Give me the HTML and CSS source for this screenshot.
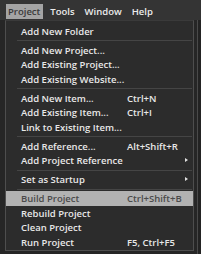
FILE: index.html
```html
<!DOCTYPE html>
<html>
<head>
<meta charset="utf-8">
<link rel="stylesheet" href="styles.css">
</head>
<body>
<div class="screen">
  <div class="menubar">
    <span class="top active">Project</span>
    <span class="top">Tools</span>
    <span class="top">Window</span>
    <span class="top">Help</span>
  </div>
  <div class="below">
    <div class="dropdown">
      <div class="item"><span class="label">Add New Folder</span></div>
      <div class="sep"></div>
      <div class="item"><span class="label">Add New Project...</span></div>
      <div class="item"><span class="label">Add Existing Project...</span></div>
      <div class="item"><span class="label">Add Existing Website...</span></div>
      <div class="sep"></div>
      <div class="item"><span class="label">Add New Item...</span><span class="key">Ctrl+N</span></div>
      <div class="item"><span class="label">Add Existing Item...</span><span class="key">Ctrl+I</span></div>
      <div class="item"><span class="label">Link to Existing Item...</span></div>
      <div class="sep"></div>
      <div class="item"><span class="label">Add Reference...</span><span class="key">Alt+Shift+R</span></div>
      <div class="item"><span class="label">Add Project Reference</span><span class="arrow"></span></div>
      <div class="sep"></div>
      <div class="item"><span class="label">Set as Startup</span><span class="arrow"></span></div>
      <div class="sep"></div>
      <div class="item hot"><span class="label">Build Project</span><span class="key">Ctrl+Shift+B</span></div>
      <div class="item"><span class="label">Rebuild Project</span></div>
      <div class="item"><span class="label">Clean Project</span></div>
      <div class="item"><span class="label">Run Project</span><span class="key">F5, Ctrl+F5</span></div>
    </div>
  </div>
</div>
</body>
</html>
```
FILE: styles.css
```css
html, body {
  margin: 0;
  padding: 0;
  background: #232323;
}
.screen {
  width: 201px;
  height: 254px;
  overflow: hidden;
  font-family: "Open Sans", "Liberation Sans", sans-serif;
  font-weight: 600;
  font-size: 9.5px;
  color: #e8e8e8;
}
.menubar {
  height: 20px;
  background: #343434;
  display: flex;
  align-items: center;
  padding-left: 6px;
  box-sizing: border-box;
  padding-top: 4px;
  padding-bottom: 1px;
}
.top {
  height: 15px;
  line-height: 15px;
  padding: 0 3px 0 2px;
  margin-right: 5px;
  color: #ececec;
}
.top.active {
  background: #a4a4a4;
  color: #3a3a3a;
}
.below {
  display: flex;
  height: 234px;
  background: #262626;
  border-right: 1px solid #4a4a4a;
  margin-right: 3px;
}
.dropdown {
  margin-left: 5px;
  width: 189px;
  height: 231px;
  box-sizing: border-box;
  background: #2c2c2c;
  border: 1px solid #4e4e4e;
  border-top: 1px solid #3a3a3a;
  padding-top: 2.75px;
}
.item {
  height: 14.5px;
  display: flex;
  align-items: center;
  padding-left: 15px;
  position: relative;
  white-space: nowrap;
}
.label {
  width: 106px;
}
.key {
  flex: none;
}
.item.hot {
  background: #b2b2b2;
  color: #4a4a4a;
}
.sep {
  height: 4.5px;
  display: flex;
  align-items: center;
  padding-left: 11px;
  padding-right: 1px;
}
.sep::after {
  content: "";
  flex: 1;
  height: 1px;
  background: #454545;
}
.arrow {
  position: absolute;
  right: 5px;
  top: 5px;
  width: 0;
  height: 0;
  border-left: 3px solid #e0e0e0;
  border-top: 2.5px solid transparent;
  border-bottom: 2.5px solid transparent;
}
```
